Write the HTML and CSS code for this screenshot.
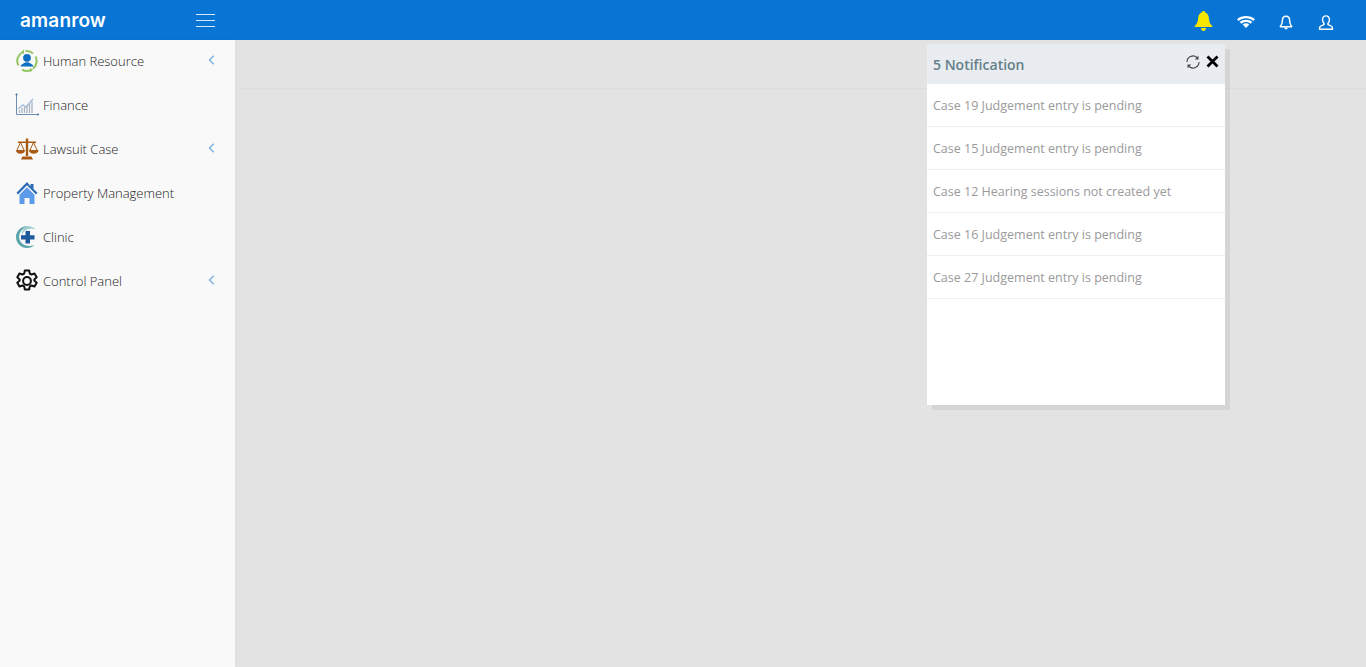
FILE: index.html
```html
<!DOCTYPE html>
<html lang="en">
<head>
<meta charset="utf-8">
<title>amanrow</title>
<link rel="stylesheet" href="styles.css">
</head>
<body>
<header class="topbar">
  <div class="brand-area">
    <span class="brand">amanrow</span>
    <button class="burger" aria-label="Menu"><span></span><span></span><span></span></button>
  </div>
  <div class="top-icons">
    <svg class="ti bell-y" width="19" height="20" viewBox="0 0 19 20"><path fill="#f7e600" d="M9.500 0c1 0 1.600.7 1.700 1.600 2.500.8 3.500 3 3.700 5.600.2 3.300.9 5.500 3.300 7.600.5.600.2 1.200-.5 1.200H1.300c-.7 0-1-.6-.5-1.200 2.400-2.100 3.100-4.300 3.300-7.600.2-2.600 1.200-4.800 3.700-5.600C7.900.7 8.500 0 9.500 0z"/><path fill="#f7e600" d="M7 17h5c0 1.700-1.100 3-2.500 3S7 18.700 7 17z"/></svg>
    <svg class="ti wifi" width="18" height="12" viewBox="0 0 18 12"><path fill="#fff" d="M9 0c3.500 0 6.500 1.100 9 3.300L16.300 5C14.300 3.200 11.800 2.300 9 2.300S3.700 3.200 1.700 5L0 3.300C2.500 1.100 5.500 0 9 0z"/><path fill="#fff" d="M9 3.700c2.500 0 4.600.8 6.300 2.300l-1.700 1.700C12.400 6.600 10.800 6 9 6s-3.400.6-4.600 1.700L2.700 6C4.400 4.500 6.500 3.700 9 3.700z"/><path fill="#fff" d="M9 7.300c1.300 0 2.400.4 3.300 1.200L9 12 5.700 8.500C6.600 7.700 7.700 7.300 9 7.300z"/></svg>
    <svg class="ti bell-o" width="14" height="15" viewBox="0 0 16 18"><path fill="none" stroke="#fff" stroke-width="1.800" stroke-linejoin="round" d="M8 1.500c-2.800 0-4.200 2-4.300 4.700-.1 3.200-.7 5.500-2.400 7.100v.9h13.400v-.9c-1.700-1.600-2.300-3.900-2.400-7.100C12.200 3.500 10.800 1.500 8 1.500z"/><path fill="#fff" d="M5.800 15h4.400c0 1.300-1 2.300-2.200 2.300S5.800 16.300 5.800 15z"/></svg>
    <svg class="ti user" width="16" height="15" viewBox="0 0 17 17"><path fill="none" stroke="#fff" stroke-width="1.600" stroke-linejoin="round" d="M8.500 1C6.200 1 4.600 2.700 4.600 5.300c0 1.800.7 3.300 1.700 4.200v1.300c-1.900.8-4.600 1.600-5 3.100-.1.500-.1 1.300-.1 2.300h14.600c0-1 0-1.800-.1-2.300-.4-1.500-3.100-2.300-5-3.100V9.500c1-.9 1.700-2.400 1.700-4.200C12.400 2.700 10.800 1 8.500 1z"/></svg>
  </div>
</header>
<div class="layout">
  <nav class="sidebar">
    <a class="nav-item">
      <svg class="ni" width="24" height="24" viewBox="0 0 24 24"><path fill="none" stroke="#93c560" stroke-width="2" d="M3.500 16.500A9.500 9.500 0 0 1 7 3.500M10.500 2a9.500 9.500 0 0 1 7.500 2.400M20.500 7.500A9.500 9.500 0 0 1 18 19.500M15.500 21.200a9.500 9.500 0 0 1-8.500-.6"/><path fill="#93c560" d="M9 .5v4.500l-3-1.800zM15 23.500V19l3 1.800z"/><circle cx="12" cy="8.800" r="3.900" fill="#0f6fc0"/><path fill="#0f6fc0" d="M5.500 17.500c.4-2.500 3.500-3 5-4.300h3c1.500 1.300 4.600 1.800 5 4.300z"/></svg>
      <span class="label">Human Resource</span>
      <svg class="chev" width="7" height="10" viewBox="0 0 7 10"><path fill="none" stroke="#7fb0e0" stroke-width="1.400" d="M5.800.8 1.500 5l4.300 4.200"/></svg>
    </a>
    <a class="nav-item">
      <svg class="ni" width="24" height="24" viewBox="0 0 24 24"><path fill="none" stroke="#6f8db3" stroke-width="1" d="M1.500 1v20.500H23"/><circle cx="1.500" cy="1.500" r="1" fill="#3f6aa0"/><circle cx="23" cy="21.500" r="1" fill="#3f6aa0"/><path fill="none" stroke="#a5c0dc" stroke-width="1.500" d="M3 16l5-4 3 2 7-8"/><path stroke="#a8b4c2" stroke-width="1.300" d="M4.500 20v-3M7 20v-5M9.500 20v-6M12 20v-7M14.500 20V11M17 20V8.500"/></svg>
      <span class="label">Finance</span>
    </a>
    <a class="nav-item">
      <svg class="ni" width="24" height="24" viewBox="0 0 24 24"><path fill="#a85a12" d="M10.800 1.500h2.400V19h-2.400z"/><path fill="#a85a12" d="M7.500 19.500h9l1.500 3H6zM3 4.500h18V6H3z"/><path fill="none" stroke="#a85a12" stroke-width="1" d="M5.500 5.500 2 13M5.500 5.500 9 13M18.500 5.500 15 13M18.500 5.500 22 13"/><path fill="#a85a12" d="M1 13h9c0 2.500-2 3.800-4.500 3.800S1 15.500 1 13zM14 13h9.500c0 2.500-2.200 3.800-4.700 3.800S14 15.500 14 13z"/></svg>
      <span class="label">Lawsuit Case</span>
      <svg class="chev" width="7" height="10" viewBox="0 0 7 10"><path fill="none" stroke="#7fb0e0" stroke-width="1.400" d="M5.800.8 1.500 5l4.300 4.200"/></svg>
    </a>
    <a class="nav-item">
      <svg class="ni" width="24" height="24" viewBox="0 0 24 24"><path fill="#2b6cb5" d="M12 1 1.500 11.800 3 13.500l9-9.200 9 9.200 1.500-1.700-4-3.900V3h-3v2.300z"/><path fill="#5b9bea" d="M12 6.300 4.500 13.800V23h5v-6h5v6h5v-9.200z"/></svg>
      <span class="label">Property Management</span>
    </a>
    <a class="nav-item">
      <svg class="ni" width="24" height="24" viewBox="0 0 24 24"><path fill="#5aa5ac" d="M12.500 1C6 1 1 6 1 12c0 6 4.800 11 11 11 3 0 5.500-1 7.500-3-3 1.200-6.300 1.300-9.200.3C6.800 19 4 15.500 4.200 11.500 4.500 6.500 8 3 12.500 1z"/><path fill="#9ccbcf" d="M12.500 1c3 0 6 1.300 8 3.500-1.500-.7-3-1-4.500-1-4.500 0-8 3-9 7C6.500 6 9 2.500 12.500 1z"/><path fill="#1f5a9e" d="M10.500 6h4.500v4.200h4.500v4.300H15v4h-4.500v-4H6v-4.300h4.500z"/></svg>
      <span class="label">Clinic</span>
    </a>
    <a class="nav-item">
      <svg class="ni" width="24" height="24" viewBox="0 0 24 24"><path fill="none" stroke="#111" stroke-width="2" stroke-linejoin="round" d="M9.800 1.500h4.400l.6 3.100 1.700.9 3-1 2.200 3.800-2.400 2.100v1.200l2.400 2.100-2.200 3.800-3-1-1.700.9-.6 3.100H9.800l-.6-3.100-1.700-.9-3 1-2.200-3.800 2.400-2.100v-1.200L2.300 8.300l2.200-3.800 3 1 1.700-.9z"/><circle cx="12" cy="12" r="3.900" fill="none" stroke="#111" stroke-width="2"/></svg>
      <span class="label">Control Panel</span>
      <svg class="chev" width="7" height="10" viewBox="0 0 7 10"><path fill="none" stroke="#7fb0e0" stroke-width="1.400" d="M5.800.8 1.500 5l4.300 4.200"/></svg>
    </a>
  </nav>
  <main class="content"><div class="subheader"></div></main>
</div>
<aside class="panel">
  <div class="panel-head">
    <span class="panel-title">5 Notification</span>
    <svg class="refresh" width="14" height="14" viewBox="0 0 14 14"><path fill="none" stroke="#444" stroke-width="1.100" d="M1 7a6 6 0 0 1 10-4.500M13 7a6 6 0 0 1-10 4.500"/><path fill="#444" d="M12.500.8v3.700H8.800zM1.500 13.200V9.500h3.700z"/></svg>
    <svg class="close" width="13" height="13" viewBox="0 0 13 13"><path stroke="#000" stroke-width="2.800" d="M1.500 1.500l10 10M11.500 1.500l-10 10"/></svg>
  </div>
  <ul class="notes">
    <li>Case 19 Judgement entry is pending</li>
    <li>Case 15 Judgement entry is pending</li>
    <li>Case 12 Hearing sessions not created yet</li>
    <li>Case 16 Judgement entry is pending</li>
    <li>Case 27 Judgement entry is pending</li>
  </ul>
</aside>
</body>
</html>
```
FILE: styles.css
```css
* { box-sizing: border-box; }
html, body { margin: 0; height: 100%; overflow: hidden; }
body { font-family: "Open Sans", "Liberation Sans", sans-serif; background: #e3e3e3; display: flex; flex-direction: column; }
.topbar { height: 40px; background: #0874d4; display: flex; justify-content: space-between; align-items: center; flex: none; }
.brand-area { width: 235px; display: flex; align-items: center; justify-content: space-between; padding: 0 20px; }
.brand { color: #fff; font-family: "Inter", sans-serif; font-weight: 600; font-size: 19px; letter-spacing: .15px; line-height: 1; }
.burger { width: 19px; height: 13px; padding: 0; margin: 0; border: 0; background: none; display: flex; flex-direction: column; justify-content: space-between; }
.burger span { display: block; height: 1px; background: #d5e7f8; }
.top-icons { display: flex; align-items: center; padding-right: 32px; }
.ti { display: block; }
.bell-y { margin-right: 24px; margin-top: 2px; }
.wifi { margin-right: 24px; margin-top: 4px; }
.bell-o { margin-right: 25px; margin-top: 5px; }
.user { margin-top: 5px; }
.layout { flex: 1; display: flex; min-height: 0; }
.sidebar { width: 235px; flex: none; background: #f9f9f9; box-shadow: 0 0 4px rgba(0,0,0,.04); }
.nav-item { height: 44px; display: flex; align-items: center; padding: 0 20px 2px 15px; color: #222; font-size: 13px; font-weight: 300; }
.ni { flex: none; margin-right: 4px; }
.label { flex: 1; white-space: nowrap; }
.chev { flex: none; margin-top: -2px; }
.content { flex: 1; }
.subheader { height: 49px; border-bottom: 1px solid #dedede; }
.panel { position: absolute; left: 927px; top: 44px; width: 298px; height: 361px; background: #fff; box-shadow: 5px 5px 0 rgba(0,0,0,.06); }
.panel-head { height: 40px; background: #e9ecf1; display: flex; align-items: center; padding: 0 6px; }
.panel-title { flex: 1; color: #648088; font-size: 14px; font-weight: 600; }
.refresh { margin-right: 6px; margin-top: -5px; }
.close { margin-top: -5px; }
.notes { list-style: none; margin: 0; padding: 0; }
.notes li { height: 43px; padding: 0 6px; display: flex; align-items: center; color: #9a9a9a; font-size: 12.5px; border-bottom: 1px solid #eee; }
```
